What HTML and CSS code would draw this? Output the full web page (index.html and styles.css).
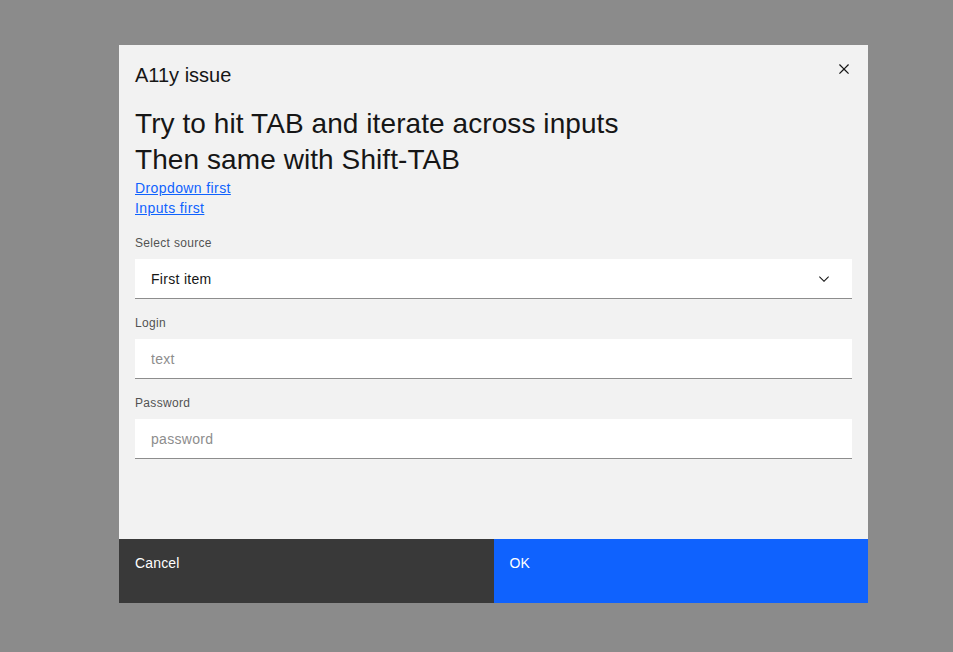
FILE: index.html
```
<!DOCTYPE html>
<html lang="en">
<head>
<meta charset="utf-8">
<title>A11y issue</title>
<link rel="stylesheet" href="styles.css">
</head>
<body>
<div class="overlay">
  <div class="modal" role="dialog" aria-label="A11y issue">
    <div class="modal-header">
      <h2 class="modal-title">A11y issue</h2>
      <button class="close-btn" aria-label="Close">
        <svg width="20" height="20" viewBox="0 0 32 32" fill="#161616"><path d="M24 9.4L22.6 8 16 14.6 9.4 8 8 9.4 14.6 16 8 22.6 9.4 24 16 17.4 22.6 24 24 22.6 17.4 16 24 9.4z"/></svg>
      </button>
    </div>
    <div class="modal-body">
      <h3 class="heading">Try to hit TAB and iterate across inputs<br>Then same with Shift-TAB</h3>
      <a class="link" href="#">Dropdown first</a>
      <a class="link" href="#">Inputs first</a>
      <div class="fields">
        <div class="field">
          <label class="label">Select source</label>
          <div class="select">
            <span class="select-value">First item</span>
            <svg class="chevron" width="16" height="16" viewBox="0 0 16 16" fill="#161616"><path d="M8 11L3 6 3.7 5.3 8 9.6 12.3 5.3 13 6z"/></svg>
          </div>
        </div>
        <div class="field">
          <label class="label">Login</label>
          <input class="input" type="text" placeholder="text">
        </div>
        <div class="field">
          <label class="label">Password</label>
          <input class="input" type="password" placeholder="password">
        </div>
      </div>
    </div>
    <div class="modal-footer">
      <button class="btn btn-secondary">Cancel</button>
      <button class="btn btn-primary">OK</button>
    </div>
  </div>
</div>
</body>
</html>
```
FILE: styles.css
```
* { box-sizing: border-box; }
html, body { margin: 0; padding: 0; }
body {
  font-family: "Liberation Sans", Arial, sans-serif;
  color: #161616;
  background: #8b8b8b;
}
.overlay {
  width: 953px;
  height: 652px;
  background: #8b8b8b;
  padding: 45px 0 0 119px;
}
.modal {
  width: 749px;
  height: 558px;
  background: #f2f2f2;
  display: flex;
  flex-direction: column;
}
.modal-header {
  position: relative;
  padding: 16px 48px 0 16px;
}
.modal-title {
  margin: 0;
  font-size: 20px;
  line-height: 28px;
  font-weight: 400;
  color: #161616;
}
.close-btn {
  position: absolute;
  top: 0;
  right: 0;
  width: 48px;
  height: 48px;
  border: 0;
  background: transparent;
  padding: 0;
  display: flex;
  align-items: center;
  justify-content: center;
  cursor: pointer;
}
.modal-body {
  flex: 1;
  padding: 17px 16px 0 16px;
  display: flex;
  flex-direction: column;
  align-items: flex-start;
}
.heading {
  margin: 0;
  font-size: 28px;
  line-height: 36px;
  font-weight: 400;
  color: #161616;
  letter-spacing: 0.08px;
}
.link {
  font-size: 14px;
  line-height: 20px;
  color: #0f62fe;
  text-decoration: underline;
  letter-spacing: 0.4px;
}
.fields {
  align-self: stretch;
  margin-top: 17px;
  display: flex;
  flex-direction: column;
  gap: 16px;
}
.field {
  display: flex;
  flex-direction: column;
}
.label {
  font-size: 12px;
  line-height: 16px;
  color: #525252;
  margin-bottom: 8px;
  letter-spacing: 0.32px;
}
.select {
  height: 40px;
  background: #ffffff;
  border-bottom: 1px solid #8d8d8d;
  display: flex;
  align-items: center;
  justify-content: space-between;
  padding: 0 16px;
}
.select-value {
  font-size: 14px;
  color: #161616;
  letter-spacing: 0.3px;
}
.chevron { margin-right: 4px; }
.input {
  height: 40px;
  background: #ffffff;
  border: 0;
  border-bottom: 1px solid #8d8d8d;
  padding: 0 16px;
  font-family: inherit;
  font-size: 14px;
  color: #161616;
  letter-spacing: 0.3px;
  outline: none;
}
.input::placeholder { color: #8d8d8d; }
.modal-footer {
  height: 64px;
  display: flex;
}
.btn {
  flex: 1;
  border: 0;
  text-align: left;
  font-family: inherit;
  font-size: 14px;
  line-height: 18px;
  padding: 15px 16px 31px 16px;
  color: #ffffff;
  letter-spacing: 0.16px;
  cursor: pointer;
  display: block;
}
.btn-secondary { background: #393939; }
.btn-primary { background: #0f62fe; }
```
